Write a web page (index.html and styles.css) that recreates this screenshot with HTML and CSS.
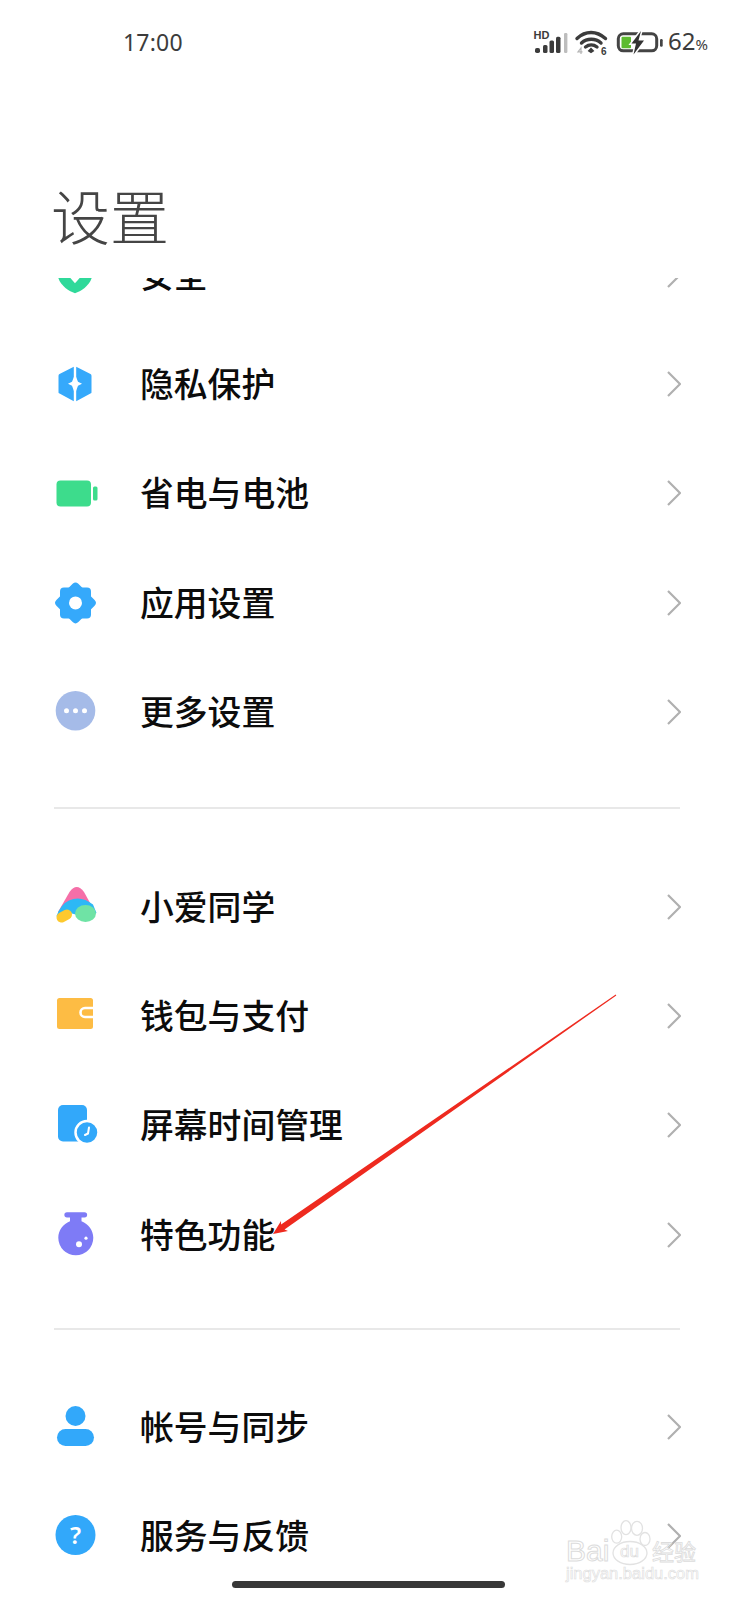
FILE: index.html
```html
<!DOCTYPE html>
<html lang="zh-CN">
<head>
<meta charset="utf-8">
<title>设置</title>
<link rel="stylesheet" href="styles.css">
</head>
<body>
<main class="page">
  <header class="status">
    <span class="time">17:00</span>
    <div class="status-icons">
      <svg class="ic-signal" width="35" height="24" viewBox="0 0 35 24">
        <text x="0.500" y="9.300" class="hd">HD</text>
        <rect x="2" y="18" width="5" height="5" rx="1.800" fill="#3c3c3c"/>
        <rect x="10" y="15" width="4.500" height="8" rx="1.500" fill="#3c3c3c"/>
        <rect x="16.500" y="10.600" width="4.500" height="12.400" rx="1.500" fill="#3c3c3c"/>
        <rect x="23" y="6.700" width="4.500" height="16.300" rx="1.500" fill="#3c3c3c"/>
        <rect x="31" y="3" width="3.400" height="20" rx="1.200" fill="#bdbdbd"/>
      </svg>
      <svg class="ic-wifi" width="34" height="24" viewBox="0 0 34 24">
        <path d="M2 8.500C10.500 .5 21.500 .5 30.500 8.500M6.500 13C12 8 20.500 8 26 13M10.500 17C14 14.200 18.500 14.200 22 17" fill="none" stroke="#3c3c3c" stroke-width="3.400" stroke-linecap="round"/>
        <path d="M16 17.500l3.400 3.500-3.400 2.200-3.400-2.200z" fill="#3c3c3c"/>
        <path d="M6 24v-6l-3 3.800h4.500" fill="none" stroke="#b5b5b5" stroke-width="1.200"/>
        <text x="26" y="24.500" class="six">6</text>
      </svg>
      <svg class="ic-batt" width="47" height="24" viewBox="0 0 47 24">
        <rect x="2.300" y="3.800" width="38.400" height="17" rx="5" fill="none" stroke="#444" stroke-width="3"/>
        <rect x="5.500" y="6.700" width="9.500" height="11.600" rx="1" fill="#5dbb2f"/>
        <path class="bolt" d="M25 1L15.500 13.500H20L17.500 24.500 28 10.500H22.500z"/>
        <rect x="44" y="9" width="2.700" height="7.700" rx="1.200" fill="#444"/>
      </svg>
      <span class="pct">62<small class="pct-sign">%</small></span>
    </div>
  </header>

  <h1 class="title">设置</h1>

  <div class="scroller">
    <section class="group group-first">
      <a class="row">
        <svg class="icon" width="40" height="40" viewBox="0 -1.800 40 40">
          <path d="M2.500 2h35v15C37.500 28 27 35 20 37.500 13 35 2.500 28 2.500 17z" fill="#2fd99a"/>
          <path d="M13 19.500L20 27.500 27 19.500z" fill="#fff"/>
        </svg>
        <span class="label">安全</span>
        <svg class="chev" width="14" height="26" viewBox="0 0 14 26"><path d="M1 1l12 12L1 25"/></svg>
      </a>
      <a class="row">
        <svg class="icon" width="40" height="40" viewBox="0 -1.250 40 40">
          <path d="M18.800 2.500V37L5 29.500a2 2 0 0 1-1.500-2.500V11.500a2 2 0 0 1 1.500-2z" fill="#35a9fb"/>
          <path d="M21.200 2.500V37L35 29.500a2 2 0 0 0 1.500-2.500V11.500a2 2 0 0 0-1.500-2z" fill="#35a9fb"/>
          <path d="M20 10l3 7.500 4 2-4 2-3 8-3-8-4-2 4-2z" fill="#fff"/>
        </svg>
        <span class="label">隐私保护</span>
        <svg class="chev" width="14" height="26" viewBox="0 0 14 26"><path d="M1 1l12 12L1 25"/></svg>
      </a>
      <a class="row">
        <svg class="icon" width="43" height="40" viewBox="0 -2.600 43 40">
          <rect x="1.500" y="6" width="34.500" height="26" rx="4" fill="#3ddc8c"/>
          <rect x="38" y="12" width="4.500" height="14" rx="1.500" fill="#3ddc8c"/>
        </svg>
        <span class="label">省电与电池</span>
        <svg class="chev" width="14" height="26" viewBox="0 0 14 26"><path d="M1 1l12 12L1 25"/></svg>
      </a>
      <a class="row">
        <svg class="icon" width="41" height="40" viewBox="0 -1.400 41 40">
          <g fill="#35a9fb">
            <rect x="5" y="4" width="31" height="31" rx="4"/>
            <rect x="5" y="4" width="31" height="31" rx="4" transform="rotate(45 20.500 19.500)"/>
          </g>
          <circle cx="20.500" cy="19.500" r="6.500" fill="#fff"/>
        </svg>
        <span class="label">应用设置</span>
        <svg class="chev" width="14" height="26" viewBox="0 0 14 26"><path d="M1 1l12 12L1 25"/></svg>
      </a>
      <a class="row">
        <svg class="icon" width="41" height="42" viewBox="0 -0.700 41 42">
          <circle cx="20.500" cy="20" r="19.800" fill="#a5bbe8"/>
          <g fill="#fff"><circle cx="11.500" cy="20" r="2.500"/><circle cx="20.500" cy="20" r="2.500"/><circle cx="29.500" cy="20" r="2.500"/></g>
        </svg>
        <span class="label">更多设置</span>
        <svg class="chev" width="14" height="26" viewBox="0 0 14 26"><path d="M1 1l12 12L1 25"/></svg>
      </a>
    </section>

    <hr class="divider divider-a">

    <section class="group">
      <a class="row">
        <svg class="icon" width="42" height="40" viewBox="0 0 42 40">
          <path d="M14.500 6Q21.700-4 29 6L39 24 3 26z" fill="#f56fa8"/>
          <path d="M1.500 30Q6 18 14 14.500 26 9 38 18.500L41.500 27 30 31 15 27 6 36z" fill="#2db8f5"/>
          <path d="M6.500 31.500L12 28.500" fill="none" stroke="#fdc92e" stroke-width="10" stroke-linecap="round"/>
          <ellipse cx="30.500" cy="27.500" rx="10.500" ry="8.500" fill="#6fe3a5"/>
        </svg>
        <span class="label">小爱同学</span>
        <svg class="chev" width="14" height="26" viewBox="0 0 14 26"><path d="M1 1l12 12L1 25"/></svg>
      </a>
      <a class="row">
        <svg class="icon" width="40" height="40" viewBox="0 0 40 40">
          <rect x="2" y="3" width="36" height="31" rx="2.500" fill="#fdbc44"/>
          <path d="M38 13H30a4.500 4.500 0 0 0 0 9h8" fill="#fdbc44" stroke="#fff" stroke-width="2.600"/>
        </svg>
        <span class="label">钱包与支付</span>
        <svg class="chev" width="14" height="26" viewBox="0 0 14 26"><path d="M1 1l12 12L1 25"/></svg>
      </a>
      <a class="row">
        <svg class="icon" width="44" height="44" viewBox="0 0 44 44">
          <rect x="3" y="3" width="29" height="36.500" rx="5" fill="#32a8fa"/>
          <circle cx="32" cy="30.400" r="11.500" fill="#32a8fa" stroke="#fff" stroke-width="2.500"/>
          <path d="M34 25.500l-1 6-3 1.500" fill="none" stroke="#fff" stroke-width="2" stroke-linecap="round"/>
        </svg>
        <span class="label">屏幕时间管理</span>
        <svg class="chev" width="14" height="26" viewBox="0 0 14 26"><path d="M1 1l12 12L1 25"/></svg>
      </a>
      <a class="row">
        <svg class="icon" width="41" height="48" viewBox="0 0 41 48">
          <path d="M12 2.200h17.500a2 2 0 0 1 0 5.300H26.500v3.800C33.500 14 38.300 20.500 38.300 27.800a17.500 17.500 0 0 1-35 0C3.300 20.500 8 14 15 11.300V7.500h-3a2 2 0 0 1 0-5.300z" fill="#7e7bf6"/>
          <circle cx="24" cy="34.200" r="3" fill="#fff"/>
          <circle cx="31" cy="28.200" r="1.600" fill="#fff"/>
        </svg>
        <span class="label">特色功能</span>
        <svg class="chev" width="14" height="26" viewBox="0 0 14 26"><path d="M1 1l12 12L1 25"/></svg>
      </a>
    </section>

    <hr class="divider divider-b">

    <section class="group">
      <a class="row">
        <svg class="icon" width="41" height="42" viewBox="0 0 41 42">
          <circle cx="20.500" cy="11" r="10" fill="#32a8fa"/>
          <rect x="2" y="24" width="37" height="17" rx="8.500" fill="#32a8fa"/>
        </svg>
        <span class="label">帐号与同步</span>
        <svg class="chev" width="14" height="26" viewBox="0 0 14 26"><path d="M1 1l12 12L1 25"/></svg>
      </a>
      <a class="row">
        <svg class="icon" width="41" height="41" viewBox="0 0 41 41">
          <circle cx="20.500" cy="20.500" r="20" fill="#32a8fa"/>
          <text x="20.500" y="29" class="q">?</text>
        </svg>
        <span class="label">服务与反馈</span>
        <svg class="chev" width="14" height="26" viewBox="0 0 14 26"><path d="M1 1l12 12L1 25"/></svg>
      </a>
    </section>
  </div>

  <svg class="arrow" width="738" height="1600" viewBox="0 0 738 1600">
    <polygon points="273,1234 288,1231 284.500,1229.600 616.300,995.400 615.700,994.600 281.100,1224.600 281,1221" fill="#ee2a1f"/>
  </svg>

  <svg class="mark" width="140" height="70" viewBox="0 0 140 70">
    <g class="mark-paw">
      <ellipse cx="56.700" cy="21.700" rx="5" ry="6.500"/>
      <ellipse cx="66" cy="12.700" rx="5" ry="7"/>
      <ellipse cx="77" cy="13.300" rx="5.500" ry="7"/>
      <ellipse cx="85" cy="24" rx="5" ry="6.500"/>
      <ellipse cx="70" cy="38" rx="17" ry="11.500"/>
    </g>
    <text x="6" y="46" class="mark-big">Bai</text>
    <text x="60" y="42" class="mark-du">du</text>
    <text x="92" y="45" class="mark-cn">经验</text>
    <text x="6" y="64" class="mark-url">jingyan.baidu.com</text>
  </svg>

  <div class="home"></div>
</main>
</body>
</html>
```
FILE: styles.css
```css
* { box-sizing: border-box; }
html, body { margin: 0; padding: 0; background: #fff; }
.page {
  position: relative;
  width: 738px;
  height: 1600px;
  overflow: hidden;
  background: #fff;
  font-family: "Noto Sans CJK SC", "Noto Sans", sans-serif;
  color: #0c0c0c;
}
.status {
  height: 84px;
  padding: 0 30px 0 123px;
  display: flex;
  align-items: center;
  justify-content: space-between;
  color: #3c3c3c;
  font-family: "Noto Sans", "Noto Sans CJK SC", sans-serif;
}
.time { font-size: 23px; letter-spacing: 0.2px; }
.status-icons { display: flex; align-items: center; }
.status-icons svg { overflow: visible; }
.ic-signal { margin-right: 7px; }
.ic-wifi { margin-right: 7px; }
.ic-batt { margin-right: 5px; }
.pct { font-size: 24px; line-height: 24px; }
.pct-sign { font-size: 15px; }
.hd { font: 700 11px "Liberation Sans", sans-serif; fill: #3c3c3c; }
.six { font: 700 10px "Liberation Sans", sans-serif; fill: #3c3c3c; }
.bolt { fill: #333; stroke: #fff; stroke-width: 3; paint-order: stroke; }

.title {
  margin: 96px 0 28px 51px;
  font-size: 59px;
  line-height: 70px;
  font-weight: 300;
  color: #454545;
}

.scroller {
  height: 1322px;
  overflow: hidden;
}
.group-first { margin-top: -58.600px; }
.row {
  display: flex;
  align-items: center;
  height: 109.200px;
  padding: 0 57px 0 140px;
  position: relative;
}
.icon {
  position: absolute;
  left: 55px;
  top: 50%;
  transform: translateY(-50%);
  overflow: visible;
}
.label {
  flex: 1;
  font-size: 33.800px;
  font-weight: 500;
  line-height: 44px;
}
.chev {
  margin-top: 2px;
  fill: none;
  stroke: #b0b0b0;
  stroke-width: 2.200;
}
.divider {
  margin: 0 58px 0 54px;
  border: 0;
  height: 2px;
  background: #e8e8e8;
}
.divider-a { margin-top: 42px; margin-bottom: 42px; }
.divider-b { margin-top: 40px; margin-bottom: 41px; }
.q { font: 600 24px "Noto Sans", sans-serif; fill: #fff; text-anchor: middle; }

.arrow { position: absolute; left: 0; top: 0; pointer-events: none; }
.mark { position: absolute; left: 560px; top: 1515px; overflow: visible; pointer-events: none; }
.mark-paw { fill: none; stroke: #e2e2e2; stroke-width: 1.300; }
.mark-big { font: 400 30px "Liberation Sans", sans-serif; fill: none; stroke: #dcdcdc; stroke-width: 1; }
.mark-du { font: 400 17px "Liberation Sans", sans-serif; fill: none; stroke: #dcdcdc; stroke-width: .7; }
.mark-cn { font: 400 22px "Noto Sans CJK SC", sans-serif; fill: none; stroke: #dcdcdc; stroke-width: .8; }
.mark-url { font: 400 16.500px "Liberation Sans", sans-serif; fill: none; stroke: #dcdcdc; stroke-width: .6; }
.home {
  position: absolute;
  left: 232px;
  top: 1581px;
  width: 273px;
  height: 7px;
  border-radius: 4px;
  background: #383838;
}
```
